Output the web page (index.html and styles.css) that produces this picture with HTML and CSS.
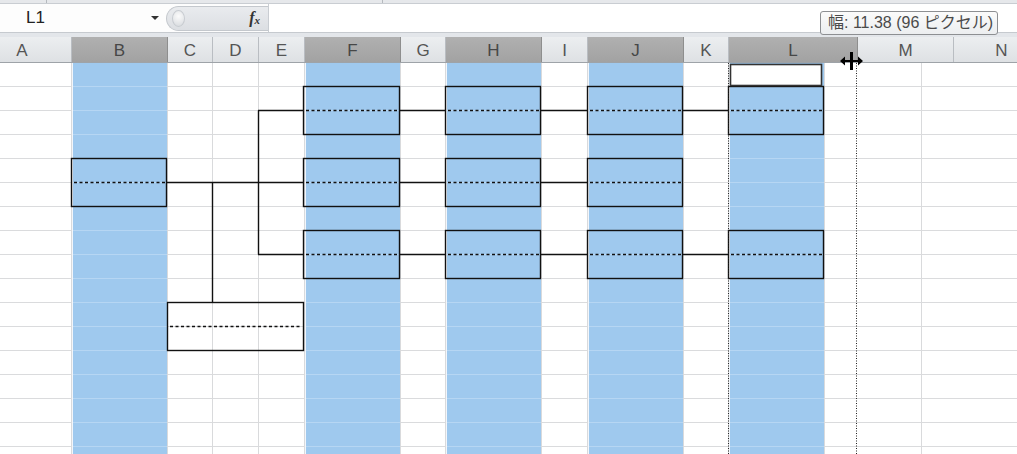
FILE: index.html
```html
<!DOCTYPE html>
<html lang="ja">
<head>
<meta charset="UTF-8">
<title>Sheet</title>
<link rel="stylesheet" href="styles.css">
</head>
<body>

<div class="top-strip">
  <span class="strip-sep s1"></span>
  <span class="strip-sep s2"></span>
</div>

<div class="formula-bar">
  <div class="namebox">
    <span class="namebox-text">L1</span>
    <span class="namebox-arrow"></span>
  </div>
  <div class="fx-pill">
    <span class="fx-bubble"></span>
    <span class="fx-label">f<sub>x</sub></span>
  </div>
  <div class="formula-input"></div>
</div>

<div class="bar-gap"></div>

<div class="col-headers">
  <div class="ch w72 first">A</div>
  <div class="ch w96 sel">B</div>
  <div class="ch w45">C</div>
  <div class="ch w46">D</div>
  <div class="ch w46">E</div>
  <div class="ch w96 sel">F</div>
  <div class="ch w45">G</div>
  <div class="ch w96 sel">H</div>
  <div class="ch w46">I</div>
  <div class="ch w96 sel">J</div>
  <div class="ch w45">K</div>
  <div class="ch w129 sel">L</div>
  <div class="ch w96">M</div>
  <div class="ch w96">N</div>
</div>

<div class="sheet">
  <div class="col w72"></div>
  <div class="col w96 blue"></div>
  <div class="col w45"></div>
  <div class="col w46"></div>
  <div class="col w46"></div>
  <div class="col w96 blue"></div>
  <div class="col w45"></div>
  <div class="col w96 blue"></div>
  <div class="col w46"></div>
  <div class="col w96 blue"></div>
  <div class="col w45"></div>
  <div class="col w96 blue"></div>
  <div class="col w97"></div>
  <div class="col w96"></div>
</div>

<!-- diagram drawn over the cells -->
<svg class="diagram" width="1017" height="454" viewBox="0 0 1017 454">
  <g fill="none" stroke="#111" stroke-width="1.4">
    <!-- left box -->
    <rect x="71.5" y="158.5" width="95" height="48"/>
    <!-- bottom box -->
    <rect x="167.5" y="302.5" width="136" height="48"/>
    <!-- F boxes -->
    <rect x="303.5" y="86.5" width="96" height="48"/>
    <rect x="303.5" y="158.5" width="96" height="48"/>
    <rect x="303.5" y="230.5" width="96" height="48"/>
    <!-- H boxes -->
    <rect x="445.5" y="86.5" width="95" height="48"/>
    <rect x="445.5" y="158.5" width="95" height="48"/>
    <rect x="445.5" y="230.5" width="95" height="48"/>
    <!-- J boxes -->
    <rect x="587.5" y="86.5" width="95" height="48"/>
    <rect x="587.5" y="158.5" width="95" height="48"/>
    <rect x="587.5" y="230.5" width="95" height="48"/>
    <!-- L boxes -->
    <rect x="728.5" y="86.5" width="95" height="48"/>
    <rect x="728.5" y="230.5" width="95" height="48"/>

    <!-- connectors -->
    <path d="M167 182.5H303 M212.5 182.5V302 M258.5 110.5V254.5 M258 110.5H303 M258 254.5H303"/>
    <path d="M400 110.5H445 M541 110.5H587 M683 110.5H728"/>
    <path d="M400 182.5H445 M541 182.5H587"/>
    <path d="M400 254.5H445 M541 254.5H587 M683 254.5H728"/>
  </g>

  <!-- dashed middles -->
  <g stroke="#111" stroke-width="1.5" stroke-dasharray="3 2.5">
    <path d="M74 182.5H165 M170 326.5H301"/>
    <path d="M306 110.5H398 M306 182.5H398 M306 254.5H398"/>
    <path d="M448 110.5H539 M448 182.5H539 M448 254.5H539"/>
    <path d="M590 110.5H681 M590 182.5H681 M590 254.5H681"/>
    <path d="M731 110.5H822 M731 254.5H822"/>
  </g>

  <!-- active cell L1 -->
  <rect x="730.5" y="64.5" width="91" height="21" fill="#fff" stroke="#333" stroke-width="1.6"/>

  <!-- resize guides -->
  <g stroke="#222" stroke-width="1" stroke-dasharray="1 1.5">
    <path d="M728.5 63V454 M856.5 63V454"/>
  </g>

  <!-- resize cursor -->
  <g fill="#000">
    <rect x="850" y="52" width="3" height="18"/>
    <rect x="843" y="60" width="17" height="2"/>
    <path d="M840 61 L845 56.5 V65.5 Z M863 61 L858 56.5 V65.5 Z"/>
  </g>
</svg>

<div class="tooltip">幅: 11.38 (96 ピクセル)</div>

</body>
</html>
```

FILE: styles.css
```css
body {
  margin: 0;
  width: 1017px;
  height: 454px;
  overflow: hidden;
  position: relative;
  background-color: #fff;
  font-family: "Liberation Sans", Arial, sans-serif;
}

.top-strip {
  height: 3px;
  background-color: #e6e8eb;
  border-bottom: 1px solid #c9cdd2;
  position: relative;
}
.strip-sep {
  position: absolute;
  top: 0;
  width: 1px;
  height: 3px;
  background-color: #b5b9be;
}
.strip-sep.s1 { left: 46px; }
.strip-sep.s2 { left: 382px; }

.formula-bar {
  height: 28px;
  display: flex;
  align-items: center;
  background-color: #fdfdfd;
}
.namebox {
  width: 166px;
  height: 28px;
  display: flex;
  align-items: center;
  position: relative;
}
.namebox-text {
  margin-left: 26px;
  font-size: 17px;
  color: #222;
}
.namebox-arrow {
  position: absolute;
  left: 151px;
  top: 12px;
  width: 0;
  height: 0;
  border-left: 4px solid transparent;
  border-right: 4px solid transparent;
  border-top: 4px solid #333;
}
.fx-pill {
  width: 102px;
  height: 25px;
  border-radius: 13px 0 0 13px;
  background: linear-gradient(#e9ebee, #dcdfe3);
  border: 1px solid #c4c8cd;
  border-right: none;
  box-sizing: border-box;
  position: relative;
}
.fx-bubble {
  position: absolute;
  left: 5px;
  top: 3px;
  width: 11px;
  height: 15px;
  border-radius: 50%;
  border: 1px solid #c8ccd1;
  background: radial-gradient(circle at 50% 35%, #fbfbfb, #d6d9dd);
}
.fx-label {
  position: absolute;
  right: 8px;
  top: 2px;
  font-family: "Liberation Serif", serif;
  font-style: italic;
  font-weight: bold;
  font-size: 16px;
  color: #333;
}
.fx-label sub {
  font-size: 11px;
  vertical-align: -1px;
}
.formula-input {
  flex: 1;
  height: 28px;
  border-left: 1px solid #c9cdd2;
  background-color: #fff;
}

.bar-gap {
  height: 4px;
  background-color: #e3e6ea;
  border-top: 1px solid #c6cacf;
}

.col-headers {
  display: flex;
  height: 25px;
  border-bottom: 1px solid #9ea3a8;
  overflow: hidden;
}
.ch {
  flex-shrink: 0;
  box-sizing: border-box;
  border-right: 1px solid #b9bdc2;
  background: linear-gradient(#eceef0, #dee1e4);
  color: #555;
  font-size: 17px;
  line-height: 27px;
  text-align: center;
}
.ch.first {
  padding-right: 27px;
}
.ch.sel {
  background: linear-gradient(#b0b0b0, #a2a2a2);
  border-right-color: #8e8e8e;
  color: #474747;
}

.sheet {
  display: flex;
  height: 391px;
  overflow: hidden;
}
.col {
  flex-shrink: 0;
  box-sizing: border-box;
  border-right: 1px solid #d9dadc;
  background: repeating-linear-gradient(#fff 0, #fff 23px, #dadbdd 23px, #dadbdd 24px);
}
.col.blue {
  border-left: 1px solid #f2f6fb;
  background: repeating-linear-gradient(#9fc9ee 0, #9fc9ee 23px, #b6d6f3 23px, #b6d6f3 24px);
}

.w45 { width: 45px; }
.w46 { width: 46px; }
.w72 { width: 72px; }
.w96 { width: 96px; }
.w97 { width: 97px; }
.w129 { width: 129px; }

.diagram {
  position: absolute;
  left: 0;
  top: 0;
  pointer-events: none;
}

.tooltip {
  position: absolute;
  left: 820px;
  top: 11px;
  width: 178px;
  height: 24px;
  box-sizing: border-box;
  border: 1px solid #8d8f92;
  border-radius: 3px;
  background: linear-gradient(#fbfbfb, #eceef0);
  color: #4a4a4a;
  font-family: "Liberation Sans", "Noto Sans CJK JP", sans-serif;
  font-size: 16px;
  line-height: 22px;
  padding-left: 7px;
  white-space: nowrap;
}
```
